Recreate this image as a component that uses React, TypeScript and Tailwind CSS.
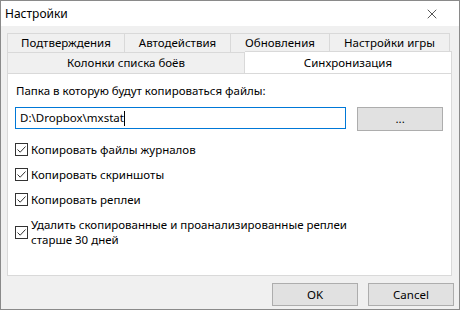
import { X } from 'lucide-react';

const font = { fontFamily: '"Noto Sans", "Open Sans", sans-serif' };

function Check({ children, className = '' }: { children: React.ReactNode; className?: string }) {
  return (
    <label className={`flex items-center gap-[3px] ${className}`}>
      <span className="w-[13px] h-[13px] shrink-0 border border-[#333] bg-white flex items-center justify-center">
        <svg width="11" height="11" viewBox="0 0 11 11">
          <path d="M1.5 5.5 L4.2 8.2 L9.5 2.5" fill="none" stroke="#333" strokeWidth="1" />
        </svg>
      </span>
      <span className="flex flex-col leading-[15px]">{children}</span>
    </label>
  );
}

export default function App() {
  return (
    <div
      className="w-[460px] h-[310px] bg-[#f0f0f0] border border-[#8a8a8a] flex flex-col text-[11.5px] text-black overflow-hidden"
      style={font}
    >
      <div className="h-[25px] bg-white flex items-center justify-between pl-[4px] pr-[19px]">
        <span className="text-[12px]">Настройки</span>
        <X size={16} strokeWidth={1} />
      </div>

      <div className="px-[6px] pt-[7px] flex flex-col">
        <div className="flex h-[20px]">
          {[
            ['Подтверждения', 'w-[118px]'],
            ['Автодействия', 'w-[106px]'],
            ['Обновления', 'w-[99px]'],
            ['Настройки игры', 'w-[120px]'],
          ].map(([t, w], i) => (
            <div
              key={t}
              className={`${w} h-[20px] border-t border-b border-r border-[#d9d9d9] ${i === 0 ? 'border-l' : ''} flex items-center justify-center`}
            >
              {t}
            </div>
          ))}
        </div>
        <div className="flex h-[20px]">
          <div className="w-[238px] h-[20px] border-l border-r border-[#d9d9d9] flex items-center justify-center">
            Колонки списка боёв
          </div>
          <div className="w-[207px] h-[22px] -mt-[2px] bg-white border-t border-r border-[#d9d9d9] flex items-center justify-center relative z-10">
            Синхронизация
          </div>
        </div>

        <div className="w-[445px] h-[203px] bg-white border border-[#d9d9d9] px-[8px] pt-[8px] flex flex-col">
          <div className="leading-[17px]">Папка в которую будут копироваться файлы:</div>
          <div className="flex items-start mt-[8px]">
            <div className="w-[332px] h-[22px] -ml-[1px] border border-[#0078d7] flex items-center pl-[4px]">
              <span>D:\Dropbox\mxstat</span>
              <span className="w-[1px] h-[15px] bg-black" />
            </div>
            <button className="ml-[11px] w-[86px] h-[24px] bg-[#e1e1e1] border border-[#adadad] flex items-center justify-center">
              ...
            </button>
          </div>
          <div className="flex flex-col -ml-[1px] mt-[11px]">
            <Check>Копировать файлы журналов</Check>
            <Check className="mt-[10px]">Копировать скриншоты</Check>
            <Check className="mt-[10px]">Копировать реплеи</Check>
            <Check className="mt-[10px]">
              <span>Удалить скопированные и проанализированные реплеи</span>
              <span>старше 30 дней</span>
            </Check>
          </div>
        </div>
      </div>

      <div className="flex justify-end gap-[10px] pr-[5px] mt-[7px]">
        <button className="w-[86px] h-[23px] bg-[#e1e1e1] border border-[#adadad]">OK</button>
        <button className="w-[86px] h-[23px] bg-[#e1e1e1] border border-[#adadad]">Cancel</button>
      </div>
    </div>
  );
}
